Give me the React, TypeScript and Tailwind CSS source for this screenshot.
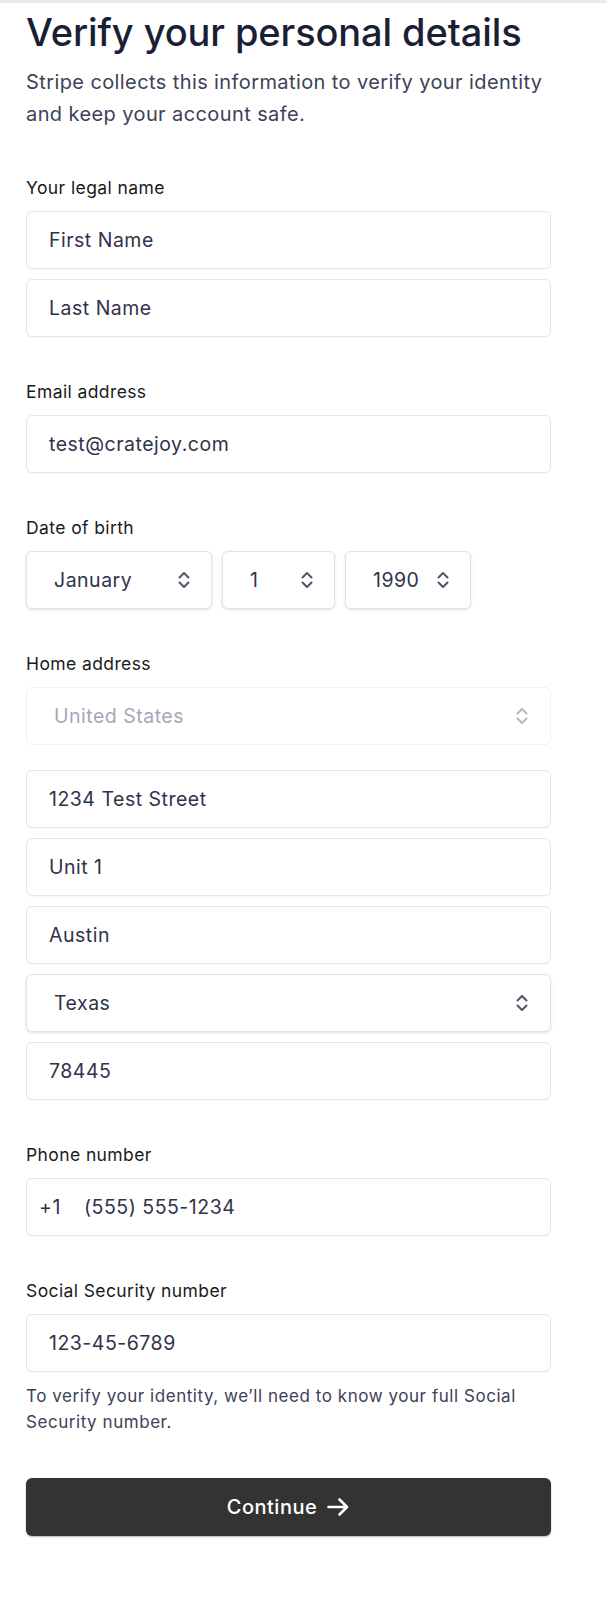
import React from "react";

const FONT = "font-['Inter','Noto_Sans',sans-serif]";

function Chevrons({ light = false }: { light?: boolean }) {
  return (
    <svg width="12" height="20" viewBox="0 0 12 20" fill="none" className="shrink-0">
      <path
        d="M1.5 7.5 L6 3 L10.5 7.5 M1.5 12.5 L6 17 L10.5 12.5"
        stroke={light ? "#b4b8c5" : "#4f566b"}
        strokeWidth="2"
        strokeLinecap="round"
        strokeLinejoin="round"
      />
    </svg>
  );
}

function Label({ children }: { children: React.ReactNode }) {
  return (
    <div className="text-[17.5px] leading-[24px] tracking-[0.4px] text-[#1a1a1a] mb-[11px]">{children}</div>
  );
}

function TextBox({ children }: { children: React.ReactNode }) {
  return (
    <div className="h-[58px] flex items-center pl-[22px] pt-[2px] rounded-[6px] border border-[#e6e6e6] bg-white shadow-[0_1px_1px_rgba(0,0,0,0.03)] text-[19.5px] tracking-[0.5px] text-[#30334a]">
      {children}
    </div>
  );
}

function SelectBox({ value, className = "" }: { value: string; className?: string }) {
  return (
    <div
      className={`h-[58px] flex items-center justify-between pl-[27px] pr-[21px] rounded-[6px] border border-[#e3e3e3] bg-white shadow-[0_1px_3px_rgba(0,0,0,0.12)] text-[19.5px] tracking-[0.5px] text-[#30334a] ${className}`}
    >
      <span className="pt-[2px]">{value}</span>
      <Chevrons />
    </div>
  );
}

export default function App() {
  return (
    <div className={`min-h-screen bg-white ${FONT}`}>
      <div className="h-[3px] bg-[#ebebeb]" />

      <div className="pl-[26px] pr-[56px]">
        <h1 className="mt-[7px] text-[38px] leading-[44px] font-medium text-[#1a1f36] tracking-[-0.1px]">
          Verify your personal details
        </h1>
        <p className="mt-[12px] text-[20px] leading-[32px] tracking-[0.4px] text-[#3c4257]">
          Stripe collects this information to verify your identity and keep your account safe.
        </p>

        <div className="mt-[46px] flex flex-col gap-[43px]">
          <div>
            <Label>Your legal name</Label>
            <div className="flex flex-col gap-[10px]">
              <TextBox>First Name</TextBox>
              <TextBox>Last Name</TextBox>
            </div>
          </div>

          <div>
            <Label>Email address</Label>
            <TextBox>test@cratejoy.com</TextBox>
          </div>

          <div>
            <Label>Date of birth</Label>
            <div className="flex gap-[10px]">
              <SelectBox value="January" className="w-[186px]" />
              <SelectBox value="1" className="w-[113px]" />
              <SelectBox value="1990" className="w-[126px] pl-[26px] pr-[20px]" />
            </div>
          </div>

          <div>
            <Label>Home address</Label>
            <div className="h-[58px] flex items-center justify-between pl-[27px] pr-[22px] rounded-[6px] border border-[#f0f0f0] bg-white text-[19.5px] tracking-[0.5px] text-[#a3a8b8]">
              <span className="pt-[2px]">United States</span>
              <Chevrons light />
            </div>
            <div className="mt-[25px] flex flex-col gap-[10px]">
              <TextBox>1234 Test Street</TextBox>
              <TextBox>Unit 1</TextBox>
              <TextBox>Austin</TextBox>
              <SelectBox value="Texas" className="pr-[22px]" />
              <TextBox>78445</TextBox>
            </div>
          </div>

          <div>
            <Label>Phone number</Label>
            <div className="h-[58px] flex items-center pl-[12px] pt-[2px] rounded-[6px] border border-[#e6e6e6] bg-white shadow-[0_1px_1px_rgba(0,0,0,0.03)] text-[19.5px] tracking-[0.5px] text-[#30334a]">
              <span className="w-[45px]">+1</span>
              <span>(555) 555-1234</span>
            </div>
          </div>

          <div>
            <Label>Social Security number</Label>
            <TextBox>123-45-6789</TextBox>
            <p className="mt-[12px] text-[17px] leading-[25.5px] tracking-[0.55px] text-[#3c4257]">
              To verify your identity, we’ll need to know your full Social Security number.
            </p>
          </div>

          <button className="h-[58px] w-full flex items-center justify-center gap-[9px] rounded-[6px] bg-[#333333] text-white text-[20px] tracking-[0.5px] font-medium shadow-[0_1px_2px_rgba(0,0,0,0.3)]">
            <span>Continue</span>
            <svg width="24" height="24" viewBox="0 0 24 24" fill="none">
              <path d="M2.5 12 H21 M13.5 4.5 L21 12 L13.5 19.5" stroke="white" strokeWidth="2.6" strokeLinecap="round" strokeLinejoin="round" />
            </svg>
          </button>
        </div>
      </div>
    </div>
  );
}
